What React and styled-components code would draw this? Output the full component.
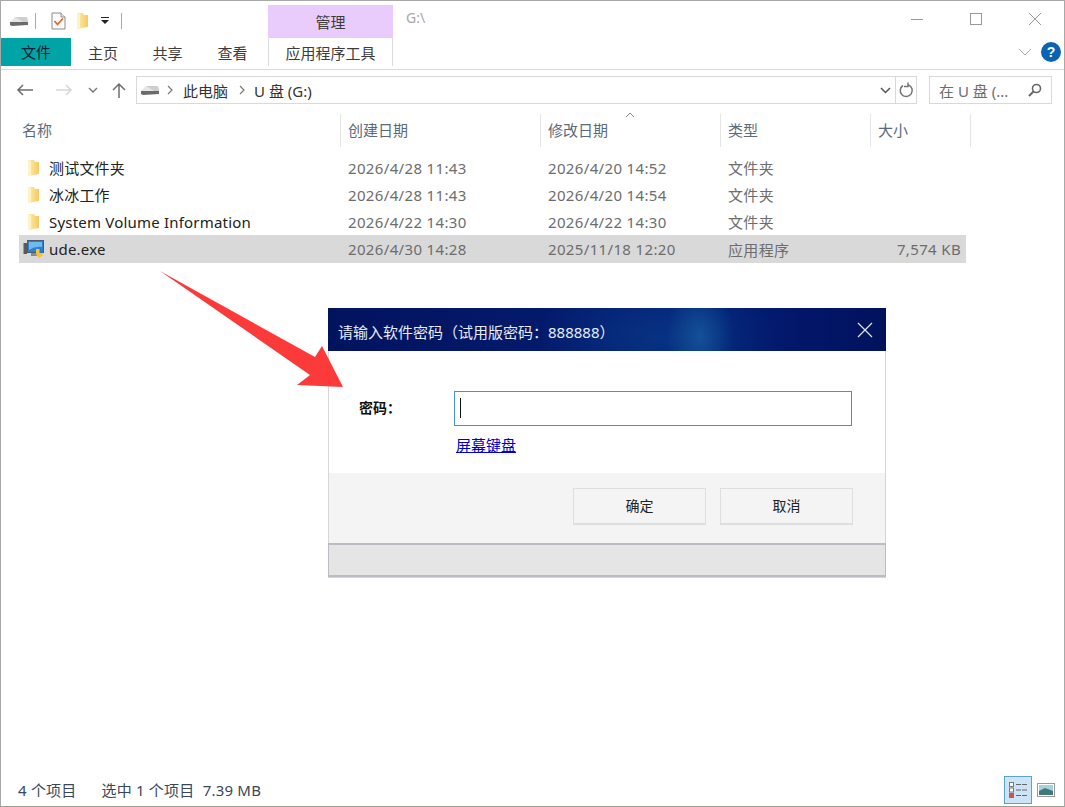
import React from 'react';
import styled, { createGlobalStyle } from 'styled-components';

const Global = createGlobalStyle`
  html, body { margin: 0; padding: 0; background: #fff; }
  body { font-family: "Noto Sans", "Noto Sans CJK SC", sans-serif; }
  * { box-sizing: border-box; }
`;

const Win = styled.div`
  position: relative;
  width: 1065px;
  height: 807px;
  overflow: hidden;
  display: flex;
  flex-direction: column;
  background: #fff;
  border: 1px solid #a7a9a9;
  border-bottom-color: #9aa08c;
  color: #333;
`;

const TitleBar = styled.div`
  height: 37px;
  display: flex;
  align-items: flex-end;
  flex-shrink: 0;
`;

const Quick = styled.div`
  width: 267px;
  height: 37px;
  display: flex;
  align-items: center;
  padding: 2px 0 0 8px;
`;

const Sep = styled.span`
  width: 1px;
  height: 16px;
  background: #a9a9a9;
  margin: ${(p) => p.$m};
`;

const Gap = styled.span`
  width: ${(p) => p.$w}px;
`;

const ManageTab = styled.div`
  width: 125px;
  height: 33px;
  background: #e9ccfb;
  color: #3c3c3c;
  font-size: 15px;
  line-height: 34px;
  text-align: center;
`;

const PathTitle = styled.div`
  margin: 0 0 8px 13px;
  height: 24px;
  line-height: 24px;
  font-size: 14px;
  color: #a8a8a8;
  flex: 1;
`;

const WinBtns = styled.div`
  display: flex;
  align-self: flex-start;
  margin: 11px 22px 0 0;
  gap: 45px;
`;

const TabRow = styled.div`
  height: 32px;
  display: flex;
  align-items: flex-start;
  flex-shrink: 0;
  border-bottom: 1px solid #dadbdc;
`;

const FileTab = styled.div`
  width: 70px;
  height: 28px;
  background: #00a4a6;
  color: #123;
  font-size: 15px;
  line-height: 29px;
  text-align: center;
`;

const Tab = styled.div`
  width: ${(p) => p.$w}px;
  height: 28px;
  font-size: 15px;
  line-height: 30px;
  text-align: center;
  color: #3c3c3c;
`;

const ToolTab = styled(Tab)`
  border-left: 1px solid #dadbdc;
  border-right: 1px solid #dadbdc;
  width: 125px;
  margin-left: 3px;
`;

const RibbonRight = styled.div`
  margin-left: auto;
  height: 28px;
  display: flex;
  align-items: center;
  gap: 9px;
  padding-right: 3px;
`;

const Help = styled.div`
  width: 20px;
  height: 20px;
  border-radius: 50%;
  background: #0b63b5;
  color: #fff;
  font: bold 14px/20px "Liberation Sans", sans-serif;
  text-align: center;
`;

const AddressRow = styled.div`
  height: 28px;
  margin-top: 6px;
  display: flex;
  align-items: center;
  flex-shrink: 0;
  padding-left: 14px;
`;

const Nav = styled.div`
  width: 121px;
  height: 28px;
  display: flex;
  align-items: center;
`;

const NavIcon = styled.svg`
  margin-left: ${(p) => p.$ml || 0}px;
  flex-shrink: 0;
`;

const AddressBox = styled.div`
  width: 781px;
  height: 28px;
  border: 1px solid #d9d9d9;
  display: flex;
  align-items: center;
  padding-left: 3px;
  font-size: 15px;
  color: #333;
`;

const Crumb = styled.span`
  margin: ${(p) => p.$m};
  white-space: pre;
`;

const AddressEnd = styled.div`
  margin-left: auto;
  height: 26px;
  display: flex;
  align-items: center;
`;

const Refresh = styled.div`
  width: 21px;
  height: 26px;
  border-left: 1px solid #d9d9d9;
  display: flex;
  align-items: center;
  justify-content: center;
`;

const SearchBox = styled.div`
  width: 123px;
  height: 28px;
  margin-left: 12px;
  border: 1px solid #d9d9d9;
  display: flex;
  align-items: center;
  justify-content: space-between;
  padding: 0 9px;
  font-size: 15px;
  color: #6d6d6d;
  white-space: nowrap;
`;

const Header = styled.div`
  display: grid;
  grid-template-columns: 322px 200px 180px 150px 100px;
  margin: 10px 0 0 18px;
  height: 33px;
  width: 952px;
  flex-shrink: 0;
`;

const HeadCell = styled.div`
  position: relative;
  font-size: 15px;
  line-height: 33px;
  color: #5a6b7b;
  padding-left: ${(p) => p.$pl || 7}px;
  border-right: 1px solid #e5e5e5;
`;

const SortMark = styled.svg`
  position: absolute;
  left: 84px;
  top: -2px;
`;

const List = styled.div`
  margin: 7px 0 0 18px;
  width: 947px;
`;

const Row = styled.div`
  display: grid;
  grid-template-columns: 322px 200px 180px 150px 95px;
  height: ${(p) => (p.$sel ? 28 : 27)}px;
  align-items: center;
  font-size: 15px;
  color: #6d6d6d;
  background: ${(p) => (p.$sel ? '#d9d9d9' : 'transparent')};
`;

const NameCell = styled.div`
  display: flex;
  align-items: center;
  gap: 5px;
  padding-left: 4px;
  color: #222;
  white-space: nowrap;
  letter-spacing: 0.2px;
`;

const FolderSlot = styled.span`
  width: 21px;
  display: flex;
  justify-content: center;
`;

const Cell = styled.div`
  padding-left: 7px;
  white-space: nowrap;
  letter-spacing: 0.35px;
  text-align: ${(p) => (p.$right ? 'right' : 'left')};
  padding-right: ${(p) => (p.$right ? 5 : 0)}px;
`;

const Status = styled.div`
  margin-top: auto;
  height: 33px;
  display: flex;
  align-items: center;
  padding: 0 0 0 17px;
  font-size: 15px;
  letter-spacing: 0.2px;
  color: #38485a;
`;

const StatusPart = styled.span`
  margin-right: ${(p) => p.$mr || 0}px;
  white-space: pre;
`;

const ViewBtns = styled.div`
  margin-left: auto;
  display: flex;
  align-items: center;
  gap: 5px;
  padding-right: 9px;
`;

const ViewActive = styled.div`
  width: 28px;
  height: 28px;
  background: #cce4f7;
  border: 1px solid #5ba3c8;
  display: flex;
  align-items: center;
  justify-content: center;
`;

const Arrow = styled.svg`
  position: absolute;
  left: 159px;
  top: 270px;
`;

const Dialog = styled.div`
  position: absolute;
  left: 327px;
  top: 307px;
  width: 558px;
  height: 270px;
  display: flex;
  flex-direction: column;
  background: #fff;
  border: 1px solid #d6d6d6;
  border-top: 0;
`;

const DialogTitle = styled.div`
  margin: 0 -1px;
  height: 43px;
  flex-shrink: 0;
  display: flex;
  align-items: center;
  justify-content: space-between;
  padding: 3px 13px 0 10px;
  color: #e6ecf6;
  font-size: 15px;
  white-space: pre;
  background:
    radial-gradient(ellipse 34px 48px at 372px 28px, rgba(28, 105, 165, 0.6), rgba(28, 105, 165, 0) 100%),
    radial-gradient(ellipse 120px 60px at 330px 30px, rgba(10, 60, 140, 0.6), rgba(10, 60, 140, 0) 100%),
    linear-gradient(90deg, #02135e 0%, #03196a 35%, #042478 65%, #021669 85%, #01125c 100%);
`;

const DialogClose = styled.svg`
  margin-top: -3px;
`;

const DialogBody = styled.div`
  height: 122px;
  flex-shrink: 0;
  display: grid;
  grid-template-columns: 95px 398px;
  grid-template-rows: 34px auto;
  row-gap: 10px;
  padding: 40px 0 0 30px;
`;

const Label = styled.div`
  font-size: 14px;
  font-weight: 700;
  color: #111;
  line-height: 34px;
  white-space: pre;
`;

const PassInput = styled.div`
  border: 1px solid #3f97c9;
  height: 35px;
  padding: 6px 0 0 5px;
`;

const Caret = styled.div`
  width: 1px;
  height: 20px;
  background: #111;
`;

const KeyLink = styled.a`
  grid-column: 2;
  padding-left: 2px;
  font-size: 15px;
  line-height: 20px;
  color: #0000cc;
  text-decoration: underline;
`;

const DialogFoot = styled.div`
  height: 70px;
  flex-shrink: 0;
  background: #f4f4f4;
  display: flex;
  justify-content: flex-end;
  gap: 14px;
  padding: 15px 32px 0 0;
`;

const DlgButton = styled.button`
  width: 133px;
  height: 37px;
  padding: 0 0 2px;
  background: #f4f4f4;
  border: 1px solid #dedede;
  border-bottom-width: 2px;
  font-family: inherit;
  font-size: 14px;
  color: #222;
`;

const DialogStrip = styled.div`
  margin: 0 -1px;
  flex: 1;
  background: #e5e5e5;
  border-top: 2px solid #b9bcc4;
  border-bottom: 2px solid #b9bcc4;
  border-left: 1px solid #b9bcc4;
  border-right: 1px solid #b9bcc4;
`;

const Drive = () => (
  <svg width="20" height="12" viewBox="0 0 20 12">
    <path d="M1 7 L6 2 H18 L19 7 Z" fill="#e6e6e6" />
    <path d="M1 7 H19 V10 L3 11 L1 10 Z" fill="#6b6b6b" />
    <path d="M6 2 H18 L19 7 H14 Z" fill="#cfcfcf" />
  </svg>
);

const Folder = ({ w = 13, h = 18 }) => (
  <svg width={w} height={h} viewBox="0 0 13 18">
    <defs>
      <linearGradient id="fld" x1="0" y1="0" x2="1" y2="0">
        <stop offset="0" stopColor="#fdeeb0" />
        <stop offset="1" stopColor="#f6c95f" />
      </linearGradient>
    </defs>
    <path d="M1 1 H7 L8 3 H12 V15 L1 17 Z" fill="url(#fld)" />
    <path d="M1 1 V17 L4 16 V2 Z" fill="#fff3c6" />
  </svg>
);

const Props = () => (
  <svg width="15" height="18" viewBox="0 0 15 18">
    <path d="M1 1 H10 L14 5 V17 H1 Z" fill="#fff" stroke="#8a8a8a" />
    <path d="M10 1 V5 H14" fill="#eee" stroke="#8a8a8a" />
    <path d="M3.5 9 L6.5 12.5 L12 6.5" fill="none" stroke="#e8632c" strokeWidth="1.8" />
  </svg>
);

const ExeIcon = () => (
  <svg width="21" height="18" viewBox="0 0 21 18">
    <rect x="0.5" y="3" width="3.5" height="11" fill="#5a5a5a" />
    <rect x="4.5" y="0.5" width="16" height="12" fill="#2f7fd0" stroke="#4a5a70" />
    <path d="M6 2 H19 V7 Q12 6 6 10 Z" fill="#6db9f2" />
    <rect x="8" y="13" width="6" height="3" fill="#8a8a8a" />
    <path d="M13 9 L20 9 V13 Q20 16 16.5 18 Q13 16 13 13 Z" fill="#f3c23a" />
    <path d="M16.5 9 H20 V13 H13 V13 H16.5 Z" fill="#3576c4" />
  </svg>
);

const rows = [
  { name: '测试文件夹', created: '2026/4/28 11:43', modified: '2026/4/20 14:52', type: '文件夹', size: '' },
  { name: '冰冰工作', created: '2026/4/28 11:43', modified: '2026/4/20 14:54', type: '文件夹', size: '' },
  { name: 'System Volume Information', created: '2026/4/22 14:30', modified: '2026/4/22 14:30', type: '文件夹', size: '' },
  { name: 'ude.exe', created: '2026/4/30 14:28', modified: '2025/11/18 12:20', type: '应用程序', size: '7,574 KB', sel: true },
];

export default function App() {
  return (
    <>
      <Global />
      <Win>
        <TitleBar>
          <Quick>
            <Drive />
            <Sep $m="0 15px 0 6px" />
            <Props />
            <Gap $w={10} />
            <Folder />
            <NavIcon width="8" height="8" viewBox="0 0 8 8" $ml={12}>
              <rect x="0" y="0" width="8" height="1" fill="#222" />
              <path d="M0 3 H8 L4 7 Z" fill="#222" />
            </NavIcon>
            <Sep $m="0 0 0 12px" />
          </Quick>
          <ManageTab>管理</ManageTab>
          <PathTitle>G:\</PathTitle>
          <WinBtns>
            <svg width="14" height="14" viewBox="0 0 14 14"><path d="M1 7.5 H13" stroke="#999" /></svg>
            <svg width="14" height="14" viewBox="0 0 14 14"><rect x="1.5" y="1.5" width="11" height="11" fill="none" stroke="#999" /></svg>
            <svg width="14" height="14" viewBox="0 0 14 14"><path d="M1 1 L13 13 M13 1 L1 13" stroke="#999" /></svg>
          </WinBtns>
        </TitleBar>
        <TabRow>
          <FileTab>文件</FileTab>
          <Tab $w={64}>主页</Tab>
          <Tab $w={65}>共享</Tab>
          <Tab $w={65}>查看</Tab>
          <ToolTab>应用程序工具</ToolTab>
          <RibbonRight>
            <svg width="14" height="8" viewBox="0 0 14 8"><path d="M1 1 L7 7 L13 1" fill="none" stroke="#aaa" /></svg>
            <Help>?</Help>
          </RibbonRight>
        </TabRow>
        <AddressRow>
          <Nav>
            <NavIcon width="20" height="14" viewBox="0 0 20 14"><path d="M18 7 H3 M8 2 L3 7 L8 12" fill="none" stroke="#6d6d6d" strokeWidth="1.5" /></NavIcon>
            <NavIcon width="20" height="14" viewBox="0 0 20 14" $ml={19}><path d="M2 7 H17 M12 2 L17 7 L12 12" fill="none" stroke="#d6d6d6" strokeWidth="1.5" /></NavIcon>
            <NavIcon width="10" height="6" viewBox="0 0 10 6" $ml={14}><path d="M1 1 L5 5 L9 1" fill="none" stroke="#777" strokeWidth="1.4" /></NavIcon>
            <NavIcon width="14" height="16" viewBox="0 0 14 16" $ml={14}><path d="M7 16 V2 M1 8 L7 2 L13 8" fill="none" stroke="#6d6d6d" strokeWidth="1.5" /></NavIcon>
          </Nav>
          <AddressBox>
            <Drive />
            <NavIcon width="6" height="10" viewBox="0 0 6 10" $ml={7}><path d="M1 1 L5 5 L1 9" fill="none" stroke="#777" strokeWidth="1.2" /></NavIcon>
            <Crumb $m="0 0 0 10px">此电脑</Crumb>
            <NavIcon width="6" height="10" viewBox="0 0 6 10" $ml={11}><path d="M1 1 L5 5 L1 9" fill="none" stroke="#777" strokeWidth="1.2" /></NavIcon>
            <Crumb $m="0 0 0 9px">U 盘 (G:)</Crumb>
            <AddressEnd>
              <NavIcon width="11" height="7" viewBox="0 0 11 7"><path d="M1 1 L5.5 5.5 L10 1" fill="none" stroke="#555" strokeWidth="1.5" /></NavIcon>
              <Gap $w={4} />
              <Refresh>
                <svg width="15" height="16" viewBox="0 0 15 16"><path d="M9.5 3 A6 6 0 1 1 4 3.5 M9 0.5 V4.5 H5" fill="none" stroke="#777" strokeWidth="1.5" /></svg>
              </Refresh>
            </AddressEnd>
          </AddressBox>
          <SearchBox>
            <span>在 U 盘 (...</span>
            <svg width="14" height="14" viewBox="0 0 14 14"><circle cx="8.5" cy="5.5" r="4" fill="none" stroke="#666" strokeWidth="1.6" /><path d="M5.5 8.5 L1 13" stroke="#666" strokeWidth="2" /></svg>
          </SearchBox>
        </AddressRow>
        <Header>
          <HeadCell $pl={3}>名称</HeadCell>
          <HeadCell>创建日期</HeadCell>
          <HeadCell>
            修改日期
            <SortMark width="10" height="6" viewBox="0 0 10 6"><path d="M1 5 L5 1 L9 5" fill="none" stroke="#888" /></SortMark>
          </HeadCell>
          <HeadCell>类型</HeadCell>
          <HeadCell>大小</HeadCell>
        </Header>
        <List>
          {rows.map((r) => (
            <Row key={r.name} $sel={r.sel}>
              <NameCell>
                {r.sel ? <ExeIcon /> : <FolderSlot><Folder /></FolderSlot>}
                <span>{r.name}</span>
              </NameCell>
              <Cell>{r.created}</Cell>
              <Cell>{r.modified}</Cell>
              <Cell>{r.type}</Cell>
              <Cell $right>{r.size}</Cell>
            </Row>
          ))}
        </List>
        <Status>
          <StatusPart $mr={25}>4 个项目</StatusPart>
          <StatusPart>选中 1 个项目  7.39 MB</StatusPart>
          <ViewBtns>
            <ViewActive>
              <svg width="20" height="18" viewBox="0 0 20 18">
                <rect x="1.5" y="1.5" width="4" height="4" fill="#fff" stroke="#777" />
                <rect x="1.5" y="7" width="4" height="4" fill="#fff" stroke="#777" />
                <rect x="1.5" y="12.5" width="4" height="4" fill="#c85a4a" stroke="#777" />
                <path d="M8 3.5 H19 M8 9 H19 M8 14.5 H19" stroke="#666" strokeDasharray="5 1" />
              </svg>
            </ViewActive>
            <svg width="18" height="14" viewBox="0 0 18 14">
              <rect x="0.5" y="0.5" width="17" height="13" fill="#fff" stroke="#999" />
              <rect x="2" y="2" width="14" height="10" fill="#a8d0e0" />
              <path d="M2 8 L8 5 L16 8 V12 H2 Z" fill="#3f7a78" />
            </svg>
          </ViewBtns>
        </Status>
        <Dialog>
          <DialogTitle>
            <span>请输入软件密码（试用版密码：888888）</span>
            <DialogClose width="16" height="16" viewBox="0 0 16 16"><path d="M1 1 L15 15 M15 1 L1 15" stroke="#dfe6f0" strokeWidth="1.2" /></DialogClose>
          </DialogTitle>
          <DialogBody>
            <Label>密码：</Label>
            <PassInput><Caret /></PassInput>
            <KeyLink>屏幕键盘</KeyLink>
          </DialogBody>
          <DialogFoot>
            <DlgButton>确定</DlgButton>
            <DlgButton>取消</DlgButton>
          </DialogFoot>
          <DialogStrip />
        </Dialog>
        <Arrow width="190" height="120" viewBox="0 0 190 120">
          <path d="M0 0 L155 86 L162 75 L183 116 L137 114 L150 104 Z" fill="#fd3a3a" />
        </Arrow>
      </Win>
    </>
  );
}
